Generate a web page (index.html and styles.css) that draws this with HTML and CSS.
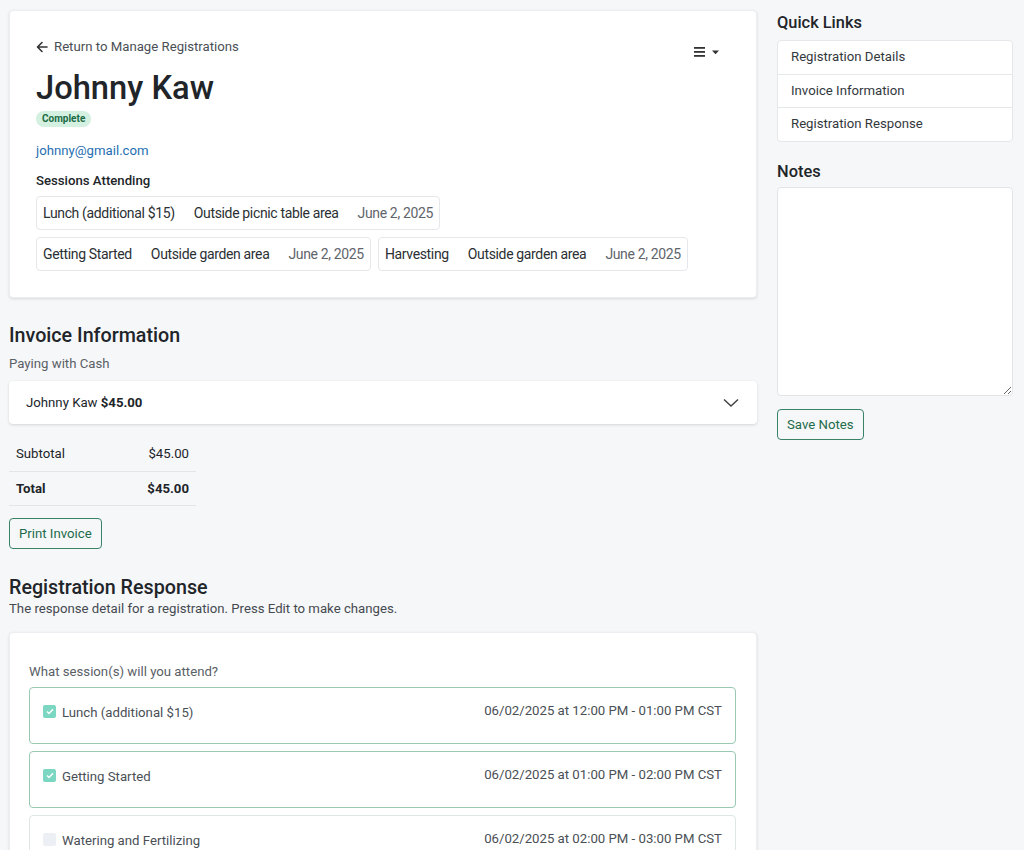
FILE: index.html
```html
<!DOCTYPE html>
<html lang="en">
<head>
<meta charset="utf-8">
<title>Registration - Johnny Kaw</title>
<link rel="stylesheet" href="styles.css">
</head>
<body>
<div class="layout">
  <main class="main">
    <section class="card header-card">
      <div class="header-top">
        <a class="back-link" href="#">
          <svg class="back-icon" width="12" height="12" viewBox="0 0 12 12"><path d="M11 6H1.8M6 1.5L1.5 6L6 10.5" fill="none" stroke="#333" stroke-width="1.6" stroke-linecap="round" stroke-linejoin="round"/></svg>
          Return to Manage Registrations
        </a>
        <button class="menu-btn" type="button" aria-label="Menu">
          <svg width="11" height="10" viewBox="0 0 11 10"><rect x="0" y="0" width="11" height="1.8" fill="#333"/><rect x="0" y="4" width="11" height="1.8" fill="#333"/><rect x="0" y="8" width="11" height="1.8" fill="#333"/></svg>
          <svg width="7" height="5" viewBox="0 0 7 5"><path d="M0 0.5H7L3.5 4.3Z" fill="#333"/></svg>
        </button>
      </div>
      <h1 class="name">Johnny Kaw</h1>
      <span class="badge">Complete</span>
      <a class="email" href="#">johnny@gmail.com</a>
      <h3 class="sessions-title">Sessions Attending</h3>
      <div class="sessions">
        <div class="session-row">
          <div class="session"><span>Lunch (additional $15)</span><span>Outside picnic table area</span><span class="date">June 2, 2025</span></div>
        </div>
        <div class="session-row">
          <div class="session"><span>Getting Started</span><span>Outside garden area</span><span class="date">June 2, 2025</span></div>
          <div class="session"><span>Harvesting</span><span>Outside garden area</span><span class="date">June 2, 2025</span></div>
        </div>
      </div>
    </section>

    <section class="invoice">
      <h2 class="section-title">Invoice Information</h2>
      <p class="muted">Paying with Cash</p>
      <div class="accordion">
        <span>Johnny Kaw <b>$45.00</b></span>
        <svg width="16" height="10" viewBox="0 0 16 10"><path d="M1 1.5L8 8L15 1.5" fill="none" stroke="#444" stroke-width="1.5"/></svg>
      </div>
      <table class="totals">
        <tr><td>Subtotal</td><td class="amt">$45.00</td></tr>
        <tr class="total"><td>Total</td><td class="amt">$45.00</td></tr>
      </table>
      <button class="btn-outline" type="button">Print Invoice</button>
    </section>

    <section class="response">
      <h2 class="section-title">Registration Response</h2>
      <p class="subtitle">The response detail for a registration. Press Edit to make changes.</p>
      <div class="card response-card">
        <p class="question">What session(s) will you attend?</p>
        <div class="option checked">
          <span class="opt-label"><span class="check on"><svg width="8" height="7" viewBox="0 0 8 7"><path d="M1 3.5L3 5.5L7 1.2" fill="none" stroke="#fff" stroke-width="1.4"/></svg></span>Lunch (additional $15)</span>
          <span class="opt-time">06/02/2025 at 12:00 PM - 01:00 PM CST</span>
        </div>
        <div class="option checked">
          <span class="opt-label"><span class="check on"><svg width="8" height="7" viewBox="0 0 8 7"><path d="M1 3.5L3 5.5L7 1.2" fill="none" stroke="#fff" stroke-width="1.4"/></svg></span>Getting Started</span>
          <span class="opt-time">06/02/2025 at 01:00 PM - 02:00 PM CST</span>
        </div>
        <div class="option">
          <span class="opt-label"><span class="check"></span>Watering and Fertilizing</span>
          <span class="opt-time">06/02/2025 at 02:00 PM - 03:00 PM CST</span>
        </div>
      </div>
    </section>
  </main>

  <aside class="side">
    <h2 class="side-title">Quick Links</h2>
    <ul class="links">
      <li>Registration Details</li>
      <li>Invoice Information</li>
      <li>Registration Response</li>
    </ul>
    <h2 class="side-title notes-title">Notes</h2>
    <textarea class="notes"></textarea>
    <button class="btn-outline save" type="button">Save Notes</button>
  </aside>
</div>
</body>
</html>
```
FILE: styles.css
```css
* { box-sizing: border-box; }
html, body { margin: 0; padding: 0; }
body {
  background: #f6f7f9;
  font-family: Roboto, "Liberation Sans", sans-serif;
  font-size: 13.2px;
  color: #212529;
  height: 850px;
  overflow: hidden;
}
.layout {
  display: grid;
  grid-template-columns: 748px 236px;
  column-gap: 20px;
  padding: 10px 0 0 9px;
}
.card {
  background: #fff;
  border: 1px solid #eceef1;
  border-radius: 4px;
  box-shadow: 0 1px 3px rgba(0,0,0,0.12);
}
.header-card {
  padding: 28px 26px 26px 26px;
  display: flex;
  flex-direction: column;
  align-items: flex-start;
}
.header-top {
  display: flex;
  justify-content: space-between;
  align-items: flex-start;
  width: 100%;
  height: 16px;
}
.back-link {
  color: #4a4f55;
  text-decoration: none;
  display: flex;
  align-items: center;
  gap: 6px;
  line-height: 16px;
}
.menu-btn {
  background: none;
  border: 0;
  padding: 0;
  margin: 8px 11px 0 0;
  display: flex;
  align-items: center;
  gap: 7px;
}
.name {
  margin: 14px 0 0 0;
  font-size: 32.7px;
  font-weight: 500;
  line-height: 38px;
  color: #212529;
}
.badge {
  margin-top: 4px;
  background: #d3f0e1;
  color: #1d6b44;
  font-size: 10px;
  font-weight: 700;
  padding: 2px 6px;
  border-radius: 8px;
  line-height: 12px;
}
.email {
  margin-top: 16px;
  color: #1f6fb2;
  text-decoration: none;
  line-height: 16px;
}
.sessions-title {
  margin: 14px 0 0 0;
  font-size: 13.2px;
  font-weight: 500;
  line-height: 16px;
}
.sessions {
  display: flex;
  flex-direction: column;
  gap: 7px;
  margin-top: 7px;
}
.session-row { display: flex; gap: 7px; }
.session {
  display: flex;
  gap: 19px;
  border: 1px solid #e5e7ea;
  border-radius: 4px;
  padding: 0 6px;
  height: 34px;
  align-items: center;
  font-size: 14px;
  letter-spacing: -0.35px;
  color: #2b2f33;
}
.session .date { color: #5f656b; }

.invoice { margin-top: 26px; }
.section-title {
  margin: 0;
  font-size: 19.7px;
  font-weight: 500;
  line-height: 24px;
  color: #212529;
}
.muted {
  margin: 8px 0 0 0;
  color: #5a6066;
  line-height: 16px;
}
.accordion {
  margin-top: 9px;
  background: #fff;
  height: 43px;
  border-radius: 4px;
  box-shadow: 0 1px 3px rgba(0,0,0,0.14);
  display: flex;
  justify-content: space-between;
  align-items: center;
  padding: 0 18px 0 17px;
}
.accordion b { font-weight: 700; }
.totals {
  margin-top: 13px;
  border-collapse: collapse;
  width: 187px;
}
.totals td {
  height: 34px;
  padding: 0 7px;
  border-bottom: 1px solid #e3e5e8;
}
.totals .amt { text-align: right; }
.totals .total td { font-weight: 700; }
.btn-outline {
  margin-top: 12px;
  background: transparent;
  border: 1px solid #3a8266;
  color: #226b4b;
  border-radius: 4px;
  font-family: inherit;
  font-size: 13.2px;
  height: 31px;
  padding: 0 9px;
}
.response { margin-top: 27px; }
.subtitle {
  margin: 1px 0 0 0;
  color: #454a50;
  line-height: 16px;
}
.response-card {
  margin-top: 15px;
  padding: 31px 20px 20px 19px;
}
.question {
  margin: 0 0 7px 0;
  color: #5a6066;
  line-height: 16px;
}
.option {
  border: 1px solid #99c9b3;
  border-radius: 4px;
  height: 57px;
  display: flex;
  justify-content: space-between;
  align-items: flex-start;
  padding: 17px 13px 0 13px;
  margin-bottom: 7px;
  color: #4a4f55;
}
.option:not(.checked) { border-color: #dfe7e3; }
.opt-label { display: flex; align-items: center; gap: 6px; line-height: 16px; }
.opt-label .check { margin-top: -2px; }
.check {
  width: 13px;
  height: 13px;
  border-radius: 2px;
  background: #eceff3;
  display: inline-flex;
  align-items: center;
  justify-content: center;
}
.check.on { background: #7bd6c2; }
.opt-time { line-height: 16px; margin-top: -2px; }

.side { padding-top: 3px; }
.side-title {
  margin: 0;
  font-size: 16.4px;
  font-weight: 500;
  line-height: 20px;
}
.links {
  list-style: none;
  margin: 7px 0 0 0;
  padding: 0;
  background: #fff;
  border: 1px solid #e5e7ea;
  border-radius: 4px;
}
.links li {
  height: 33.5px;
  line-height: 32px;
  padding: 0 13px;
  border-top: 1px solid #e5e7ea;
  color: #33383d;
}
.links li:first-child { border-top: 0; height: 32.5px; line-height: 32px; }
.notes-title { margin-top: 20px; }
.notes {
  display: block;
  margin-top: 5px;
  width: 236px;
  height: 209px;
  background: #fff;
  border: 1px solid #e2e5e8;
  border-radius: 4px;
  resize: vertical;
}
.save { margin-top: 13px; height: 31px; padding: 0 9px; }
```
